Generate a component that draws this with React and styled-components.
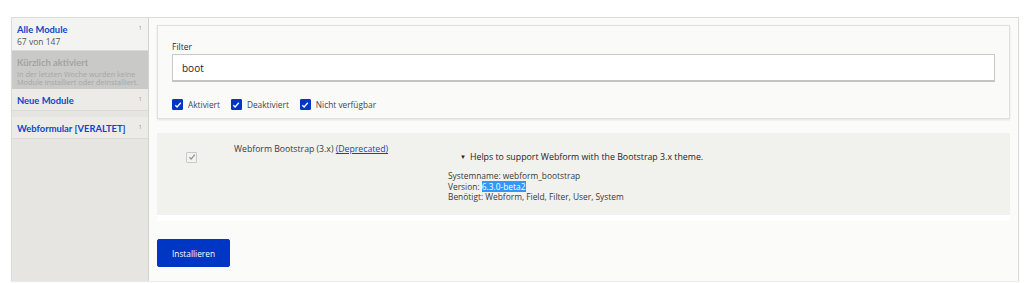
import React from "react";
import styled, { createGlobalStyle } from "styled-components";

const Global = createGlobalStyle`
  html, body { margin: 0; padding: 0; background: #ffffff; }
  body { font-family: "Open Sans", "Noto Sans", sans-serif; color: #232429; }
  * { box-sizing: border-box; }
`;

const Page = styled.div`
  padding: 17px 5px 2px 11px;
`;

const Frame = styled.div`
  display: grid;
  grid-template-columns: 137px 1fr;
  border: 1px solid #dcdbd7;
  box-shadow: 0 1px 1px rgba(0,0,0,0.08);
  height: 264px;
`;

const Sidebar = styled.div`
  background: #e6e5e1;
  border-right: 1px solid #d3d2ce;
  display: flex;
  flex-direction: column;
`;

const Tab = styled.div`
  position: relative;
  height: ${p => p.$h}px;
  background: ${p => (p.$active ? "#f3f3f1" : p.$disabled ? "#c9c9c7" : "#ecebe8")};
  padding: ${p => (p.$disabled ? "5px 4px 0 5px" : "5px 14px 0 5px")};
  border-bottom: 1px solid ${p => (p.$disabled ? "#c9c9c7" : "#dad9d5")};
  margin-bottom: ${p => p.$gap || 0}px;
`;

const TabTitle = styled.div`
  font-family: Lato, "Open Sans", sans-serif;
  font-size: 9.4px;
  line-height: 13px;
  font-weight: 700;
  white-space: nowrap;
  color: ${p => (p.$disabled ? "#a4a4a2" : "#0b47c8")};
`;

const TabSub = styled.div`
  font-size: 8.5px;
  line-height: 11px;
  color: #55565b;
`;

const TabDesc = styled.div`
  font-size: 7.3px;
  line-height: 8px;
  color: #a7a7a5;
  margin-top: 1px;
  white-space: nowrap;
`;

const Count = styled.span`
  position: absolute;
  right: 6px;
  top: 6px;
  font-size: 6px;
  color: #9c9c9a;
`;

const Main = styled.div`
  background: #fbfbfa;
  padding: 7px 8px 14px 8px;
  display: flex;
  flex-direction: column;
`;

const FilterPanel = styled.div`
  background: #fafaf8;
  border: 1px solid #e0e0dc;
  box-shadow: 0 1px 2px rgba(0,0,0,0.1);
  padding: 15px 14px 8px 14px;
  height: 94px;
`;

const Label = styled.div`
  font-size: 8.5px;
  line-height: 12px;
  color: #2c2d32;
  margin-bottom: 1px;
`;

const Input = styled.div`
  height: 28px;
  background: #ffffff;
  border: 1px solid #c9c9c7;
  border-bottom: 2px solid #c3c3c1;
  font-size: 10px;
  display: flex;
  align-items: center;
  padding-left: 9px;
  color: #232429;
`;

const Checks = styled.div`
  display: flex;
  gap: 11px;
  margin-top: 17px;
`;

const CheckItem = styled.label`
  display: flex;
  align-items: center;
  gap: 5px;
  font-size: 8.3px;
  color: #43444a;
`;

const Box = styled.span`
  width: 11px;
  height: 11px;
  border-radius: 1px;
  background: ${p => (p.$disabled ? "#f3f3f1" : "#0036c4")};
  border: 1px solid ${p => (p.$disabled ? "#c9c9c7" : "#0036c4")};
  display: inline-flex;
  align-items: center;
  justify-content: center;
`;

const Table = styled.div`
  margin-top: 14px;
  background: #ffffff;
  padding-bottom: 6px;
`;

const Row = styled.div`
  background: #f1f1ed;
  height: 82px;
  display: grid;
  grid-template-columns: 77px 214px 1fr;
  padding-top: 10px;
`;

const CheckCell = styled.div`
  padding-left: 29px;
  padding-top: 1px;
`;

const NameCell = styled.div`
  font-size: 8.7px;
  line-height: 12px;
  color: #38393e;
`;

const Link = styled.a`
  color: #0b47c8;
  text-decoration: underline;
`;

const DescCell = styled.div`
  padding-top: 8px;
`;

const Summary = styled.div`
  font-size: 8.8px;
  line-height: 12px;
  color: #232429;
  padding-left: 12px;
  display: flex;
  gap: 4px;
  align-items: center;
`;

const Triangle = styled.span`
  font-size: 6px;
`;

const Details = styled.div`
  margin-top: 8px;
  font-size: 8.4px;
  line-height: 10.5px;
  color: #38393e;
`;

const Selected = styled.span`
  background: #3297fd;
  color: #ffffff;
`;

const Button = styled.button`
  margin-top: 18px;
  align-self: flex-start;
  width: 73px;
  height: 28px;
  background: #0036c4;
  border: 1px solid #0036c4;
  border-radius: 2px;
  color: #ffffff;
  font-family: inherit;
  font-size: 8.3px;
  padding: 0;
`;

const Tick = ({ color }) => (
  <svg width="8" height="8" viewBox="0 0 8 8">
    <path d="M1.3 4.2 L3.1 6 L6.8 1.8" fill="none" stroke={color} strokeWidth="1.3" />
  </svg>
);

export default function App() {
  return (
    <>
      <Global />
      <Page>
        <Frame>
          <Sidebar>
            <Tab $active $h={33}>
              <TabTitle>Alle Module</TabTitle>
              <TabSub>67 von 147</TabSub>
              <Count>1</Count>
            </Tab>
            <Tab $disabled $h={38}>
              <TabTitle $disabled>Kürzlich aktiviert</TabTitle>
              <TabDesc>In der letzten Woche wurden keine<br />Module installiert oder deinstalliert.</TabDesc>
            </Tab>
            <Tab $gap={6} $h={22}>
              <TabTitle>Neue Module</TabTitle>
              <Count>1</Count>
            </Tab>
            <Tab $h={22}>
              <TabTitle>Webformular [VERALTET]</TabTitle>
              <Count>1</Count>
            </Tab>
          </Sidebar>
          <Main>
            <FilterPanel>
              <Label>Filter</Label>
              <Input>boot</Input>
              <Checks>
                <CheckItem><Box><Tick color="#ffffff" /></Box>Aktiviert</CheckItem>
                <CheckItem><Box><Tick color="#ffffff" /></Box>Deaktiviert</CheckItem>
                <CheckItem><Box><Tick color="#ffffff" /></Box>Nicht verfügbar</CheckItem>
              </Checks>
            </FilterPanel>
            <Table>
              <Row>
                <CheckCell>
                  <Box $disabled><Tick color="#9a9a98" /></Box>
                </CheckCell>
                <NameCell>
                  Webform Bootstrap (3.x) <Link>(Deprecated)</Link>
                </NameCell>
                <DescCell>
                  <Summary><Triangle>▼</Triangle>Helps to support Webform with the Bootstrap 3.x theme.</Summary>
                  <Details>
                    <div>Systemname: webform_bootstrap</div>
                    <div>Version: <Selected>6.3.0-beta2</Selected></div>
                    <div>Benötigt: Webform, Field, Filter, User, System</div>
                  </Details>
                </DescCell>
              </Row>
            </Table>
            <Button>Installieren</Button>
          </Main>
        </Frame>
      </Page>
    </>
  );
}
